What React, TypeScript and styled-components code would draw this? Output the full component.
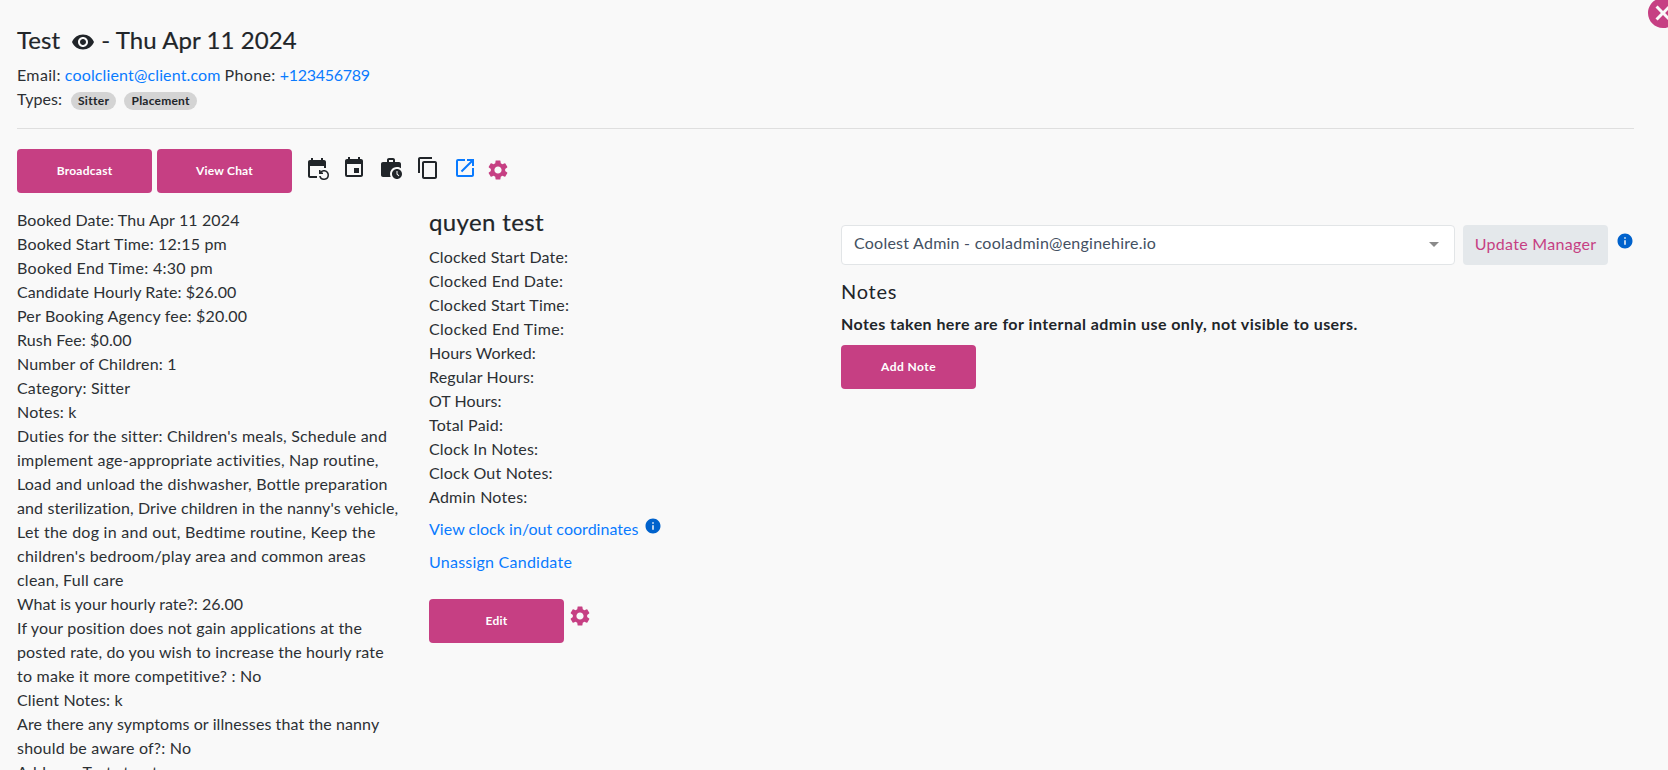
import React from "react";
import styled, { createGlobalStyle } from "styled-components";
import {
  MdCancel,
  MdContentCopy,
  MdEvent,
  MdEventRepeat,
  MdInfo,
  MdOpenInNew,
  MdSettings,
  MdVisibility,
  MdWorkHistory,
} from "react-icons/md";

const ink = "#212529";
const pink = "#c63f83";
const blue = "#0a7bff";

const GlobalStyle = createGlobalStyle`
  *, *::before, *::after { box-sizing: border-box; }
  html, body { height: 100%; }
  body {
    margin: 0;
    overflow: hidden;
    background: #f9f9f9;
    color: #2c3034;
    font: 400 16px/24px Lato, "Noto Sans", sans-serif;
  }
  svg { display: block; flex: none; }
`;

const Page = styled.main`
  position: relative;
  height: 770px;
  overflow: hidden;
  padding: 24px 34px 0 17px;
`;

const CloseButton = styled.button`
  position: absolute;
  top: -5px;
  right: -13px;
  padding: 0;
  border: 0;
  background: none;
  color: ${pink};
  font-size: 36px;
  line-height: 0;
`;

const Tracked = styled.span<{ $track?: number }>`
  letter-spacing: ${(p) => p.$track ?? 0.17}px;
  white-space: pre;
`;

const Title = styled.h4`
  display: flex;
  align-items: center;
  height: 31px;
  margin: 0;
  color: ${ink};
  font-size: 24px;
  font-weight: 400;
  line-height: 30px;
  -webkit-text-stroke: 0.2px currentColor;

  svg {
    margin: 5px 6px 0 11px;
  }
`;

const ContactLine = styled.div`
  display: flex;
  gap: 4px;
  height: 24px;
  margin-top: 8px;
`;

const Link = styled.a<{ $track?: number }>`
  color: ${blue};
  letter-spacing: ${(p) => p.$track ?? 0.17}px;
  text-decoration: none;
  white-space: pre;
`;

const TypesLine = styled.div`
  display: flex;
  align-items: flex-start;
  height: 25px;
`;

const Badges = styled.div`
  display: flex;
  gap: 8px;
  margin: 5px 0 0 9px;
`;

const Badge = styled.span<{ $width: number; $track: number }>`
  display: flex;
  justify-content: center;
  width: ${(p) => p.$width}px;
  height: 18px;
  border-radius: 9px;
  background: #d4d4d4;
  color: ${ink};
  font-size: 12px;
  font-weight: 700;
  line-height: 18px;
  letter-spacing: ${(p) => p.$track}px;
`;

const Divider = styled.hr`
  height: 1px;
  margin: 16px 0 20px;
  border: 0;
  background: #dfdfdf;
`;

const Toolbar = styled.div`
  display: flex;
  gap: 5px;
  height: 44px;
`;

const Button = styled.button<{ $track?: number }>`
  width: 135px;
  height: 44px;
  padding: 0;
  border: 0;
  border-radius: 4px;
  background: ${pink};
  color: #fff;
  font: 700 12px/44px Lato, "Noto Sans", sans-serif;
  letter-spacing: ${(p) => p.$track ?? 0.25}px;
`;

const IconRow = styled.div`
  display: flex;
  gap: 13px;
  margin: 7px 0 0 8px;
  color: ${ink};
  font-size: 24px;

  .link {
    color: ${blue};
  }

  .settings {
    margin: 2px 0 0 -4px;
    color: ${pink};
  }
`;

const Columns = styled.div`
  display: grid;
  grid-template-columns: 412px 412px 1fr;
  align-items: start;
  margin-top: 15px;
`;

const Lines = styled.div`
  display: flex;
  flex-direction: column;
  align-items: flex-start;
`;

const CandidateName = styled.h4`
  height: 29px;
  margin: 0 0 8px;
  color: ${ink};
  font-size: 24px;
  font-weight: 400;
  line-height: 27px;
  letter-spacing: 0.37px;
  -webkit-text-stroke: 0.2px currentColor;
`;

const LinkLine = styled.div<{ $top: number }>`
  display: flex;
  gap: 5px;
  height: 24px;
  margin-top: ${(p) => p.$top}px;
  color: #0062cc;

  svg {
    font-size: 18px;
  }
`;

const EditRow = styled.div`
  display: flex;
  gap: 4px;
  margin-top: 25px;

  svg {
    margin-top: 5px;
    color: ${pink};
    font-size: 24px;
  }
`;

const ManagerRow = styled.div`
  display: flex;
  margin-top: 17px;

  svg {
    margin: 7px 0 0 8px;
    color: #0062cc;
    font-size: 18px;
  }
`;

const Select = styled.div`
  display: flex;
  align-items: center;
  justify-content: space-between;
  width: 614px;
  height: 40px;
  padding: 0 15px 2px 12px;
  border: 1px solid #e2e5e7;
  border-radius: 4px;
  background: #fff;
  color: #435062;
  line-height: 22px;

  ${Tracked} {
    margin-bottom: 2px;
  }
`;

const Caret = styled.span`
  border: 5px solid transparent;
  border-top-color: #8a8a8a;
  border-bottom-width: 0;
`;

const UpdateButton = styled.button`
  width: 145px;
  height: 40px;
  margin-left: 8px;
  padding: 0 0 2px;
  border: 0;
  border-radius: 4px;
  background: #e4e8eb;
  color: ${pink};
  font: 400 16px/38px Lato, "Noto Sans", sans-serif;
  letter-spacing: 0.3px;
`;

const NotesHeading = styled.h5`
  height: 24px;
  margin: 14px 0 9px;
  color: ${ink};
  font-size: 20px;
  font-weight: 400;
  line-height: 24px;
  letter-spacing: 0.75px;
`;

const NotesHint = styled.p`
  margin: 0 0 9px;
  color: ${ink};
  font-weight: 700;
  letter-spacing: 0.44px;
`;

const bookingLines: [string, number][] = [
  ["Booked Date: Thu Apr 11 2024", 0.13],
  ["Booked Start Time: 12:15 pm", 0.18],
  ["Booked End Time: 4:30 pm", 0.29],
  ["Candidate Hourly Rate: $26.00", 0.08],
  ["Per Booking Agency fee: $20.00", 0.18],
  ["Rush Fee: $0.00", 0.12],
  ["Number of Children: 1", 0.18],
  ["Category: Sitter", 0.18],
  ["Notes: k", 0.17],
  ["Duties for the sitter: Children's meals, Schedule and", 0.18],
  ["implement age-appropriate activities, Nap routine,", 0.21],
  ["Load and unload the dishwasher, Bottle preparation", 0.2],
  ["and sterilization, Drive children in the nanny's vehicle,", 0.12],
  ["Let the dog in and out, Bedtime routine, Keep the", 0.26],
  ["children's bedroom/play area and common areas", 0.24],
  ["clean, Full care", 0.23],
  ["What is your hourly rate?: 26.00", 0.03],
  ["If your position does not gain applications at the", 0.18],
  ["posted rate, do you wish to increase the hourly rate", 0.14],
  ["to make it more competitive? : No", 0.23],
  ["Client Notes: k", 0.14],
  ["Are there any symptoms or illnesses that the nanny", 0.09],
  ["should be aware of?: No", 0.21],
  ["Address: Test street", 0.17],
];

const clockLines: [string, number][] = [
  ["Clocked Start Date:", 0.17],
  ["Clocked End Date:", 0.29],
  ["Clocked Start Time:", 0.2],
  ["Clocked End Time:", 0.33],
  ["Hours Worked:", 0.05],
  ["Regular Hours:", 0.14],
  ["OT Hours:", 0.06],
  ["Total Paid:", 0.19],
  ["Clock In Notes:", 0.16],
  ["Clock Out Notes:", 0.18],
  ["Admin Notes:", 0.25],
];

function TextLines({ items }: { items: [string, number][] }) {
  return (
    <Lines>
      {items.map(([text, track]) => (
        <Tracked key={text} $track={track}>
          {text}
        </Tracked>
      ))}
    </Lines>
  );
}

export default function App() {
  return (
    <Page>
      <GlobalStyle />
      <CloseButton aria-label="Close">
        <MdCancel />
      </CloseButton>

      <Title>
        <Tracked $track={0.1}>Test</Tracked>
        <MdVisibility />
        <Tracked $track={0.08}>- Thu Apr 11 2024</Tracked>
      </Title>
      <ContactLine>
        <Tracked $track={0.35}>Email:</Tracked>
        <Link $track={0.14}>coolclient@client.com</Link>
        <Tracked $track={0.35}>Phone:</Tracked>
        <Link $track={-0.28}>+123456789</Link>
      </ContactLine>
      <TypesLine>
        <Tracked $track={0.07}>Types:</Tracked>
        <Badges>
          <Badge $width={45} $track={0.32}>Sitter</Badge>
          <Badge $width={73} $track={0.2}>Placement</Badge>
        </Badges>
      </TypesLine>
      <Divider />

      <Toolbar>
        <Button>Broadcast</Button>
        <Button $track={0.2}>View Chat</Button>
        <IconRow>
          <MdEventRepeat />
          <MdEvent />
          <MdWorkHistory />
          <MdContentCopy />
          <MdOpenInNew className="link" />
          <MdSettings className="settings" />
        </IconRow>
      </Toolbar>

      <Columns>
        <TextLines items={bookingLines} />

        <div>
          <CandidateName>quyen test</CandidateName>
          <TextLines items={clockLines} />
          <LinkLine $top={8}>
            <Link $track={0.03}>View clock in/out coordinates</Link>
            <MdInfo />
          </LinkLine>
          <LinkLine $top={9}>
            <Link $track={0.24}>Unassign Candidate</Link>
          </LinkLine>
          <EditRow>
            <Button>Edit</Button>
            <MdSettings />
          </EditRow>
        </div>

        <div>
          <ManagerRow>
            <Select>
              <Tracked $track={0.24}>Coolest Admin - cooladmin@enginehire.io</Tracked>
              <Caret />
            </Select>
            <UpdateButton>Update Manager</UpdateButton>
            <MdInfo />
          </ManagerRow>
          <NotesHeading>Notes</NotesHeading>
          <NotesHint>
            Notes taken here are for internal admin use only, not visible to users.
          </NotesHint>
          <Button $track={0.45}>Add Note</Button>
        </div>
      </Columns>
    </Page>
  );
}
